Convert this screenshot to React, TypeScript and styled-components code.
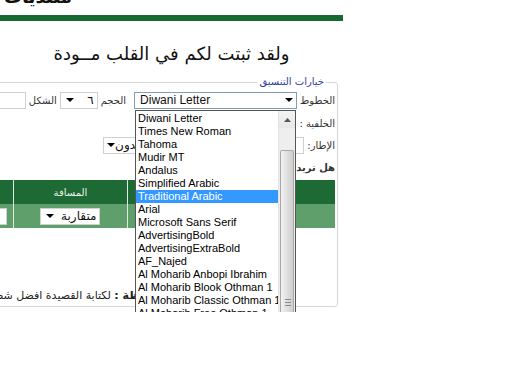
import React from 'react';
import styled, { createGlobalStyle } from 'styled-components';

const GlobalStyle = createGlobalStyle`
  html, body {
    margin: 0;
    padding: 0;
    background: #ffffff;
  }
`;

const fonts = [
  'Diwani Letter',
  'Times New Roman',
  'Tahoma',
  'Mudir MT',
  'Andalus',
  'Simplified Arabic',
  'Traditional Arabic',
  'Arial',
  'Microsoft Sans Serif',
  'AdvertisingBold',
  'AdvertisingExtraBold',
  'AF_Najed',
  'Al Moharib Anbopi Ibrahim',
  'Al Moharib Blook Othman 1',
  'Al Moharib Classic Othman 1',
  'Al Moharib Free Othman 1',
];

export default function App() {
  return (
    <Page>
      <GlobalStyle />
      <Column>
        <Banner>
          <span>منتديات</span>
        </Banner>
        <GreenBar />
        <Verse>ولقد ثبتت لكم في القلب مــودة</Verse>
        <Options>
          <Legend>خيارات التنسيق</Legend>
          <FormRow tall>
            <Label>الخطوط</Label>
            <FakeSelect width={163} focused>
              <span>Diwani Letter</span>
              <Arrow />
            </FakeSelect>
            <Label space={5}>الحجم</Label>
            <FakeSelect width={38}>
              <span>٦</span>
              <Arrow />
            </FakeSelect>
            <Label>الشكل</Label>
            <TextBox width={110} />
          </FormRow>
          <FormRow>
            <Label>الخلفية :</Label>
          </FormRow>
          <FormRow>
            <Label>الإطار:</Label>
            <TextBox width={158} />
            <FakeSelect width={40}>
              <span>بدون</span>
              <Arrow />
            </FakeSelect>
          </FormRow>
          <FormRow>
            <Label bold>هل تريد إظهار الإطار</Label>
          </FormRow>
          <Grid>
            <thead>
              <tr>
                <HeadCell width={209}>المحاذاة</HeadCell>
                <HeadCell width={114}>المسافة</HeadCell>
                <HeadCell width={60}>اللون</HeadCell>
              </tr>
            </thead>
            <tbody>
              <tr>
                <BodyCell>
                  <FakeSelect width={60}>
                    <span>وسط</span>
                    <Arrow />
                  </FakeSelect>
                </BodyCell>
                <BodyCell>
                  <FakeSelect width={60}>
                    <span>متقاربة</span>
                    <Arrow />
                  </FakeSelect>
                </BodyCell>
                <BodyCell edge>
                  <TextBox width={40} />
                </BodyCell>
              </tr>
            </tbody>
          </Grid>
          <Note>
            <b>ملاحظة :</b> لكتابة القصيدة افضل شطر في كل سطر
          </Note>
        </Options>
      </Column>
      <DropList>
        {fonts.map((f) => (
          <DropItem key={f} selected={f === 'Traditional Arabic'}>
            {f}
          </DropItem>
        ))}
        <ScrollBar>
          <ScrollButton>
            <svg width="7" height="4" viewBox="0 0 7 4">
              <path d="M0 4 L3.5 0 L7 4 Z" fill="#555" />
            </svg>
          </ScrollButton>
          <ScrollThumb>
            <Grip />
          </ScrollThumb>
        </ScrollBar>
      </DropList>
    </Page>
  );
}

const Page = styled.div`
  position: relative;
  width: 512px;
  height: 384px;
  overflow: hidden;
  background: #ffffff;
`;

const Column = styled.div`
  width: 343px;
  direction: rtl;
  font-family: 'DejaVu Sans', Tahoma, sans-serif;
`;

const Banner = styled.div`
  height: 15px;
  overflow: hidden;
  direction: ltr;
  display: flex;
  align-items: flex-end;

  span {
    font-family: 'DejaVu Sans', sans-serif;
    font-weight: 700;
    font-size: 18px;
    line-height: 20px;
    margin-bottom: 8px;
    margin-left: 4px;
    color: #111;
  }
`;

const GreenBar = styled.div`
  height: 6px;
  background: #136a33;
`;

const Verse = styled.div`
  margin-top: 18px;
  height: 30px;
  text-align: center;
  font-family: 'DejaVu Sans', sans-serif;
  font-size: 18px;
  line-height: 30px;
  color: #111;
`;

const Options = styled.div`
  position: relative;
  width: 460px;
  height: 225px;
  margin-top: 13px;
  margin-right: 5px;
  border: 1px solid #d6d6d6;
  border-radius: 3px;
  padding: 5px 2px 0 0;
  box-sizing: border-box;
`;

const Legend = styled.div`
  position: absolute;
  top: -7px;
  right: 11px;
  background: #ffffff;
  padding: 0 2px;
  font-size: 10px;
  line-height: 12px;
  color: #2a3ba0;
`;

const FormRow = styled.div<{ tall?: boolean }>`
  display: flex;
  align-items: center;
  gap: 3px;
  height: ${(p) => (p.tall ? 24 : 22)}px;
`;

const Label = styled.span<{ bold?: boolean; space?: number }>`
  font-size: 10px;
  font-weight: ${(p) => (p.bold ? 700 : 400)};
  color: #333;
  white-space: nowrap;
  margin-right: ${(p) => p.space ?? 0}px;
`;

const FakeSelect = styled.div<{ width: number; focused?: boolean }>`
  width: ${(p) => p.width}px;
  height: 17px;
  flex-shrink: 0;
  box-sizing: border-box;
  border: 1px solid ${(p) => (p.focused ? '#7f9db9' : '#d0d0d0')};
  background: #ffffff;
  display: flex;
  align-items: center;
  justify-content: space-between;
  padding: 0 3px 0 5px;
  font-family: 'Liberation Sans', 'DejaVu Sans', sans-serif;
  font-size: 12px;
  color: #111;

  span {
    direction: ${(p) => (p.focused ? 'ltr' : 'rtl')};
    order: ${(p) => (p.focused ? 2 : 0)};
  }
`;

const Arrow = styled.i`
  width: 0;
  height: 0;
  border-left: 4px solid transparent;
  border-right: 4px solid transparent;
  border-top: 4px solid #000;
  order: 1;
`;

const TextBox = styled.div<{ width: number }>`
  width: ${(p) => p.width}px;
  height: 17px;
  flex-shrink: 0;
  box-sizing: border-box;
  border: 1px solid #d0d0d0;
  background: #fff;
`;

const Grid = styled.table`
  margin-top: 2px;
  border-collapse: collapse;
  width: 383px;
`;

const HeadCell = styled.th<{ width: number }>`
  width: ${(p) => p.width}px;
  height: 24px;
  background: #1d6a35;
  color: #e8f2ea;
  font-size: 10px;
  font-weight: 400;
  border-left: 1px solid #dfe9e2;
  padding: 0;
`;

const BodyCell = styled.td<{ edge?: boolean }>`
  height: 24px;
  background: #5e9f6c;
  border-left: 1px solid #dfe9e2;
  padding: 0;

  & > div {
    margin: ${(p) => (p.edge ? '0 6px 0 0' : '0 auto')};
  }
`;

const Note = styled.div`
  margin-top: 61px;
  padding-right: 172px;
  font-size: 11px;
  color: #222;
  white-space: nowrap;
`;

const DropList = styled.div`
  position: absolute;
  left: 135px;
  top: 110px;
  width: 161px;
  height: 202px;
  box-sizing: border-box;
  border: 1px solid #555;
  border-bottom: none;
  background: #ffffff;
  overflow: hidden;
  padding-top: 1px;
`;

const DropItem = styled.div<{ selected?: boolean }>`
  height: 13px;
  width: 143px;
  padding-left: 2px;
  box-sizing: border-box;
  font-family: 'Liberation Sans', sans-serif;
  font-size: 11px;
  line-height: 13px;
  white-space: nowrap;
  color: ${(p) => (p.selected ? '#ffffff' : '#000000')};
  background: ${(p) => (p.selected ? '#3399ff' : 'transparent')};
`;

const ScrollBar = styled.div`
  position: absolute;
  top: 0;
  right: 0;
  width: 16px;
  height: 100%;
  background: #eeeeee;
  border-left: 1px solid #e2e2e2;
  display: flex;
  flex-direction: column;
`;

const ScrollButton = styled.div`
  height: 17px;
  display: flex;
  align-items: center;
  justify-content: center;
  background: linear-gradient(#f4f4f4, #e6e6e6);
`;

const ScrollThumb = styled.div`
  margin-top: 22px;
  flex: 1;
  margin-left: 1px;
  margin-right: 1px;
  border: 1px solid #a8a8a8;
  border-bottom: none;
  border-radius: 2px 2px 0 0;
  background: linear-gradient(to right, #f2f2f2, #dcdcdc 60%, #cfcfcf);
  position: relative;
`;

const Grip = styled.div`
  position: absolute;
  left: 4px;
  top: 148px;
  width: 6px;
  height: 7px;
  background: repeating-linear-gradient(#8a8a8a 0 1px, transparent 1px 3px);
`;
